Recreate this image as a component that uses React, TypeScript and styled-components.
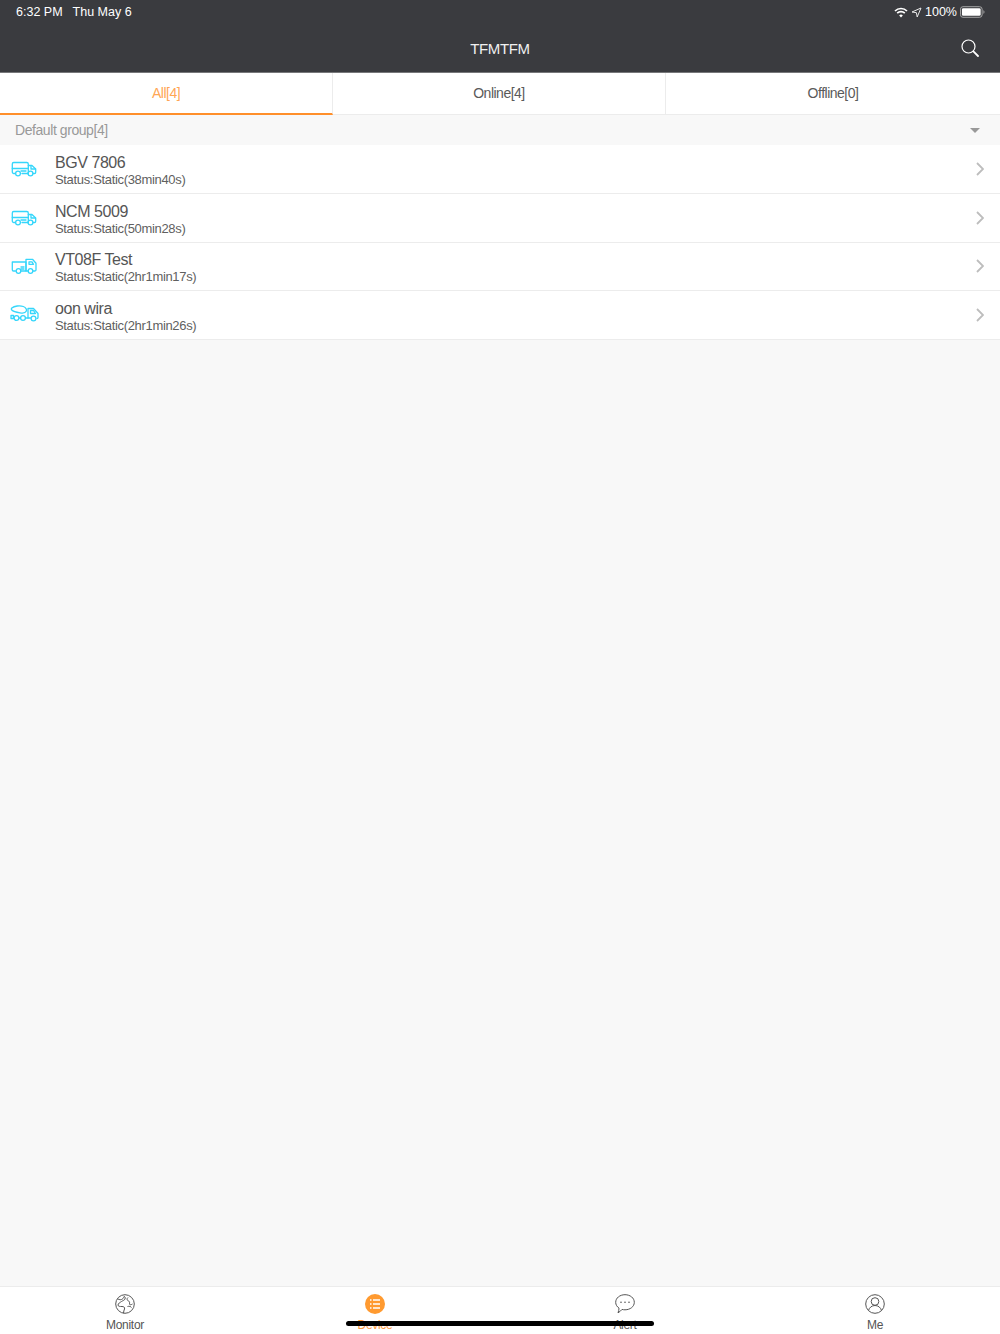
import React from "react";
import styled, { createGlobalStyle } from "styled-components";

const GlobalStyle = createGlobalStyle`
  html, body { margin: 0; padding: 0; height: 100%; }
  body { font-family: "Liberation Sans", Arial, sans-serif; font-weight: 400; background: #f8f8f8; }
  * { box-sizing: border-box; }
`;

const Page = styled.div`
  position: relative;
  width: 1000px;
  height: 1334px;
  display: flex;
  flex-direction: column;
  overflow: hidden;
  background: #f8f8f8;
`;

const Header = styled.header`
  height: 73px;
  flex: none;
  background: #3a3b3f;
  border-bottom: 1px solid #77787a;
  color: #fff;
`;

const StatusBar = styled.div`
  height: 24px;
  padding: 0 15px 0 16px;
  display: flex;
  align-items: center;
  justify-content: space-between;
  font-size: 12.5px;
`;

const StatusLeft = styled.div`
  display: flex;
  gap: 10px;
`;

const StatusRight = styled.div`
  display: flex;
  align-items: center;
  gap: 3px;
`;

const NavBar = styled.div`
  height: 48px;
  padding: 0 21px 0 0;
  position: relative;
  display: flex;
  align-items: center;
  justify-content: flex-end;
`;

const NavTitle = styled.div`
  position: absolute;
  left: 0;
  right: 0;
  text-align: center;
  font-size: 15px;
  letter-spacing: -0.35px;
  color: #f0f0f0;
`;

const Tabs = styled.div`
  height: 42px;
  flex: none;
  display: grid;
  grid-template-columns: 333px 333px 334px;
  background: #fff;
  border-bottom: 1px solid #ececec;
`;

const Tab = styled.div<{ $active?: boolean }>`
  display: flex;
  align-items: center;
  justify-content: center;
  font-size: 14px;
  letter-spacing: -0.5px;
  color: ${(p) => (p.$active ? "#ffa655" : "#5a5a5a")};
  border-right: 1px solid #ececec;
  margin-bottom: ${(p) => (p.$active ? "-1px" : "0")};
  padding-bottom: ${(p) => (p.$active ? "0" : "1px")};
  border-bottom: ${(p) => (p.$active ? "2px solid #ff8f2b" : "0")};
  &:last-child { border-right: 0; }
`;

const GroupRow = styled.div`
  height: 30px;
  flex: none;
  padding: 0 20px 0 15px;
  display: flex;
  align-items: center;
  justify-content: space-between;
  font-size: 14px;
  letter-spacing: -0.43px;
  color: #999;
`;

const Caret = styled.div`
  width: 0;
  height: 0;
  border-left: 5px solid transparent;
  border-right: 5px solid transparent;
  border-top: 5px solid #999;
`;

const List = styled.div`
  display: flex;
  flex-direction: column;
  flex: 1;
`;

const Row = styled.div`
  height: 48.75px;
  flex: none;
  display: flex;
  align-items: center;
  padding: 0 16px 0 10px;
  background: #fff;
  border-bottom: 1px solid #ececec;
`;

const IconSlot = styled.div`
  width: 45px;
  flex: none;
  display: flex;
  align-items: center;
`;

const RowText = styled.div`
  flex: 1;
  display: flex;
  flex-direction: column;
  padding-top: 3px;
`;

const RowTitle = styled.div`
  font-size: 16px;
  line-height: 18px;
  letter-spacing: -0.45px;
  color: #555;
`;

const RowStatus = styled.div`
  font-size: 13px;
  line-height: 15px;
  letter-spacing: -0.33px;
  color: #5f5f5f;
`;

const TabBar = styled.nav`
  height: 48px;
  flex: none;
  display: grid;
  grid-template-columns: repeat(4, 250px);
  background: #fff;
  border-top: 1px solid #ececec;
`;

const TabItem = styled.div<{ $active?: boolean }>`
  display: flex;
  flex-direction: column;
  align-items: center;
  padding-top: 7px;
  gap: 4px;
  font-size: 12px;
  line-height: 15px;
  letter-spacing: -0.3px;
  color: ${(p) => (p.$active ? "#ff9a3c" : "#555")};
`;

const HomeIndicator = styled.div`
  position: absolute;
  left: 346px;
  bottom: 8px;
  width: 308px;
  height: 5px;
  border-radius: 3px;
  background: #000;
`;

const Wifi = () => (
  <svg width="14" height="11" viewBox="0 0 14 11" fill="none" stroke="#fff" strokeWidth="1.7">
    <path d="M1 4a8.5 8.5 0 0 1 12 0" />
    <path d="M3.2 6.2a5.4 5.4 0 0 1 7.6 0" />
    <path d="M7 10.500 5.200 8.400a2.700 2.700 0 0 1 3.600 0z" fill="#fff" stroke="none" />
  </svg>
);

const Location = () => (
  <svg width="11" height="11" viewBox="0 0 11 11" fill="none" stroke="#e8e8e8" strokeWidth="1">
    <path d="M10 1 1 5l4.400.7L6.200 10z" strokeLinejoin="round" />
  </svg>
);

const Battery = () => (
  <svg width="25" height="12" viewBox="0 0 26 12">
    <rect x="0.500" y="0.500" width="22.500" height="11" rx="2.600" fill="none" stroke="#aaa" />
    <rect x="2" y="2" width="19.500" height="8" rx="1.400" fill="#fff" />
    <path d="M24.400 4.200c.8.3 1 1 1 1.800s-.2 1.500-1 1.800z" fill="#aaa" />
  </svg>
);

const Search = () => (
  <svg width="18" height="18" viewBox="0 0 18 18" fill="none" stroke="#fff" strokeWidth="1.2">
    <circle cx="7.500" cy="7.500" r="6.500" />
    <path d="M12.400 12.400 17 17" strokeWidth="1.800" strokeLinecap="round" />
  </svg>
);

const Chevron = () => (
  <svg width="8" height="14" viewBox="0 0 8 14" fill="none" stroke="#bdbdbd" strokeWidth="1.800">
    <path d="M1 1l6 6-6 6" />
  </svg>
);

const vehicleStroke = {
  fill: "none",
  stroke: "#35d6fb",
  strokeWidth: 1.3,
  strokeLinejoin: "round" as const,
  strokeLinecap: "round" as const,
};

const VanIcon = () => (
  <svg width="30" height="20" viewBox="0 0 30 20" {...vehicleStroke}>
    <path d="M5.500 14.500H3.800a1.500 1.500 0 0 1-1.500-1.500V5a1.500 1.500 0 0 1 1.500-1.500h13a1.500 1.500 0 0 1 1.500 1.500v9.500H12" />
    <path d="M18.300 6.500h3.700l3.700 3.500v3.300a1.200 1.200 0 0 1-1.200 1.200H23M18.300 14.500H17.500" />
    <path d="M2.300 9.500h16M21 6.800v3.200h4.500M11 12h5" />
    <circle cx="8" cy="14.500" r="2.400" />
    <circle cx="20.500" cy="14.500" r="2.400" />
  </svg>
);

const TruckIcon = () => (
  <svg width="30" height="20" viewBox="0 0 30 20" {...vehicleStroke}>
    <path d="M5.500 15H3.500A1.300 1.300 0 0 1 2.300 13.700V6h13.700v9h-5" />
    <path d="M16 15V3.300h6.500l3.500 4v6.500a1.200 1.200 0 0 1-1.200 1.200H23M16 15h2" />
    <path d="M19 5.800h3l1.500 2.500H19zM11 11h3M11 13h3" />
    <circle cx="8.500" cy="15" r="2.300" />
    <circle cx="20.500" cy="15" r="2.300" />
  </svg>
);

const MixerIcon = () => (
  <svg width="30" height="20" viewBox="0 0 30 20" {...vehicleStroke}>
    <path d="M1.800 3c2.500-2 8-2.800 11.500-1.500 2.600 1 3.700 3 2.900 4.800-.8 1.700-3.400 2-6.200 1.500C6.700 7.300 3 6.300 1.800 5 1.300 4.400 1.300 3.600 1.800 3z" />
    <path d="M1 10.500h2.500v3H1zM3.500 12h.5M9 13h1.500M15.500 13h5" />
    <path d="M18 13V3.500h5.500l4.500 5v4a1 1 0 0 1-1 1" />
    <path d="M20.500 5.500h3l2 3h-5z" />
    <circle cx="6.500" cy="13" r="2.400" />
    <circle cx="13" cy="13" r="2.400" />
    <circle cx="23.500" cy="13.500" r="2.400" />
  </svg>
);

const GlobeIcon = () => (
  <svg width="20" height="20" viewBox="0 0 20 20" fill="none" stroke="#555" strokeWidth="1">
    <circle cx="10" cy="10" r="9.300" />
    <path d="M2.500 5c2 .5 3 1 4 .5s2-1 2.500-3c1 0 1.500 1 1 2.500-.5 1.300-2 1.500-3.500 2.500S3 9.500 3 11c0 1.500 2 1.500 4 1.500s3 1 2.500 2.500-1 2.500-1 4.300" />
    <path d="M13 3.500c-1.500 1-1 3 .5 3.500s1 2 1 3 1.500 1 3 0M12.500 12.500c1.500-.5 3.500 0 4 1" />
  </svg>
);

const ListBadge = () => (
  <svg width="20" height="20" viewBox="0 0 20 20">
    <circle cx="10" cy="10" r="10" fill="#ff9a30" />
    <path d="M8 6h7M8 10h7M8 14h7" stroke="#fff" strokeWidth="1.400" />
    <path d="M5 6h1.500M5 10h1.500M5 14h1.500" stroke="#fff" strokeWidth="1.600" />
  </svg>
);

const ChatIcon = () => (
  <svg width="20" height="20" viewBox="0 0 20 20" fill="none" stroke="#555" strokeWidth="1">
    <path d="M10 .7c5.200 0 9.300 3.300 9.300 7.600s-4.100 7.500-9.300 7.500c-1 0-2-.1-3-.4-1 1.300-2.500 2.600-4 3.400.6-1.500 1-3 1-4.700C2 12.800.7 10.700.7 8.300.7 4 4.800.7 10 .7z" />
    <circle cx="6" cy="8.300" r=".8" fill="#555" stroke="none" />
    <circle cx="10" cy="8.300" r=".8" fill="#555" stroke="none" />
    <circle cx="14" cy="8.300" r=".8" fill="#555" stroke="none" />
  </svg>
);

const PersonIcon = () => (
  <svg width="20" height="20" viewBox="0 0 20 20" fill="none" stroke="#555" strokeWidth="1">
    <circle cx="10" cy="10" r="9.300" />
    <circle cx="10" cy="7.500" r="3.800" />
    <path d="M3.500 16.500c.8-3 3.300-5 6.500-5s5.700 2 6.500 5" />
  </svg>
);

const devices = [
  { name: "BGV 7806", status: "Status:Static(38min40s)", icon: <VanIcon /> },
  { name: "NCM 5009", status: "Status:Static(50min28s)", icon: <VanIcon /> },
  { name: "VT08F Test", status: "Status:Static(2hr1min17s)", icon: <TruckIcon /> },
  { name: "oon wira", status: "Status:Static(2hr1min26s)", icon: <MixerIcon /> },
];

export default function App() {
  return (
    <Page>
      <GlobalStyle />
      <Header>
        <StatusBar>
          <StatusLeft>
            <span>6:32 PM</span>
            <span>Thu May 6</span>
          </StatusLeft>
          <StatusRight>
            <Wifi />
            <Location />
            <span>100%</span>
            <Battery />
          </StatusRight>
        </StatusBar>
        <NavBar>
          <NavTitle>TFMTFM</NavTitle>
          <Search />
        </NavBar>
      </Header>
      <Tabs>
        <Tab $active>All[4]</Tab>
        <Tab>Online[4]</Tab>
        <Tab>Offline[0]</Tab>
      </Tabs>
      <GroupRow>
        <span>Default group[4]</span>
        <Caret />
      </GroupRow>
      <List>
        {devices.map((d) => (
          <Row key={d.name}>
            <IconSlot>{d.icon}</IconSlot>
            <RowText>
              <RowTitle>{d.name}</RowTitle>
              <RowStatus>{d.status}</RowStatus>
            </RowText>
            <Chevron />
          </Row>
        ))}
      </List>
      <TabBar>
        <TabItem>
          <GlobeIcon />
          Monitor
        </TabItem>
        <TabItem $active>
          <ListBadge />
          Device
        </TabItem>
        <TabItem>
          <ChatIcon />
          Alert
        </TabItem>
        <TabItem>
          <PersonIcon />
          Me
        </TabItem>
      </TabBar>
      <HomeIndicator />
    </Page>
  );
}
